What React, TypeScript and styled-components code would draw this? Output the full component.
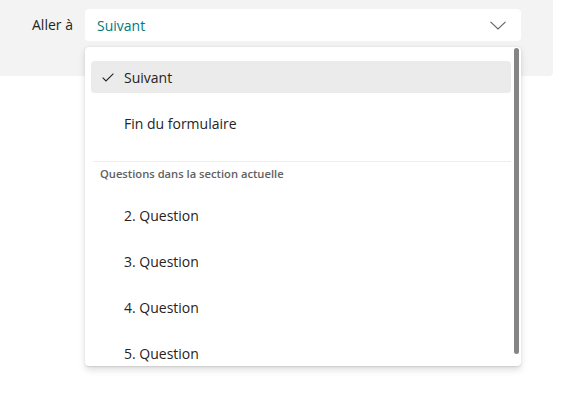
import * as React from "react";
import styled, { createGlobalStyle } from "styled-components";

const GlobalStyle = createGlobalStyle`
  body {
    margin: 0;
    background: #ffffff;
    font-family: "Open Sans", "Noto Sans", sans-serif;
    color: #242424;
  }
`;

const Page = styled.div`
  position: relative;
  width: 563px;
  height: 401px;
  overflow: hidden;
`;

const Panel = styled.div`
  width: 553px;
  height: 76px;
  box-sizing: border-box;
  background: #f3f3f3;
  border-bottom-right-radius: 4px;
  padding: 9px 0 0 32px;
  display: flex;
  align-items: flex-start;
`;

const Label = styled.div`
  width: 53px;
  height: 32px;
  line-height: 32px;
  font-size: 14px;
  color: #242424;
`;

const Select = styled.div`
  width: 436px;
  height: 32px;
  box-sizing: border-box;
  background: #ffffff;
  border-radius: 4px;
  padding: 0 15px 0 12px;
  display: flex;
  align-items: center;
  justify-content: space-between;
`;

const SelectValue = styled.span`
  font-size: 14px;
  color: #03787c;
`;

const Menu = styled.div`
  position: absolute;
  top: 47px;
  left: 85px;
  width: 436px;
  height: 319px;
  background: #ffffff;
  border-radius: 4px;
  box-shadow: 0 3.2px 7.2px rgba(0, 0, 0, 0.13), 0 0.6px 1.8px rgba(0, 0, 0, 0.11);
  overflow: hidden;
`;

const List = styled.div`
  padding: 14px 10px 0 6px;
  display: flex;
  flex-direction: column;
`;

const Item = styled.div<{ selected?: boolean }>`
  height: 32px;
  flex-shrink: 0;
  border-radius: 4px;
  background: ${({ selected }) => (selected ? "#ebebeb" : "transparent")};
  display: flex;
  align-items: center;
  padding-left: 11px;
  margin-bottom: 14px;
  font-size: 14px;
  color: #242424;
`;

const CheckSlot = styled.span`
  width: 22px;
  display: flex;
  align-items: center;
`;

const Divider = styled.div`
  height: 1px;
  background: #ededed;
  margin: 8px 0 0 2px;
`;

const GroupHeader = styled.div`
  height: 24px;
  line-height: 24px;
  padding-left: 9px;
  margin-bottom: 13px;
  font-size: 11.2px;
  font-weight: 600;
  color: #616161;
`;

const Thumb = styled.div`
  position: absolute;
  top: 1px;
  right: 2px;
  width: 5px;
  height: 306px;
  background: #858585;
  border-radius: 3px;
`;

const Chevron = () => (
  <svg width="16" height="9" viewBox="0 0 16 9" fill="none">
    <path d="M0.5 0.8 L8 8 L15.5 0.8" stroke="#616161" strokeWidth="1.1" />
  </svg>
);

const Check = () => (
  <svg width="12" height="9" viewBox="0 0 12 9" fill="none">
    <path d="M0.6 4.6 L4 8 L11.4 0.6" stroke="#242424" strokeWidth="1.1" />
  </svg>
);

const questions = ["2. Question", "3. Question", "4. Question", "5. Question"];

export default function App() {
  return (
    <Page>
      <GlobalStyle />
      <Panel>
        <Label>Aller à</Label>
        <Select>
          <SelectValue>Suivant</SelectValue>
          <Chevron />
        </Select>
      </Panel>
      <Menu>
        <List>
          <Item selected>
            <CheckSlot>
              <Check />
            </CheckSlot>
            Suivant
          </Item>
          <Item>
            <CheckSlot />
            Fin du formulaire
          </Item>
          <Divider />
          <GroupHeader>Questions dans la section actuelle</GroupHeader>
          {questions.map((q) => (
            <Item key={q}>
              <CheckSlot />
              {q}
            </Item>
          ))}
        </List>
        <Thumb />
      </Menu>
    </Page>
  );
}
